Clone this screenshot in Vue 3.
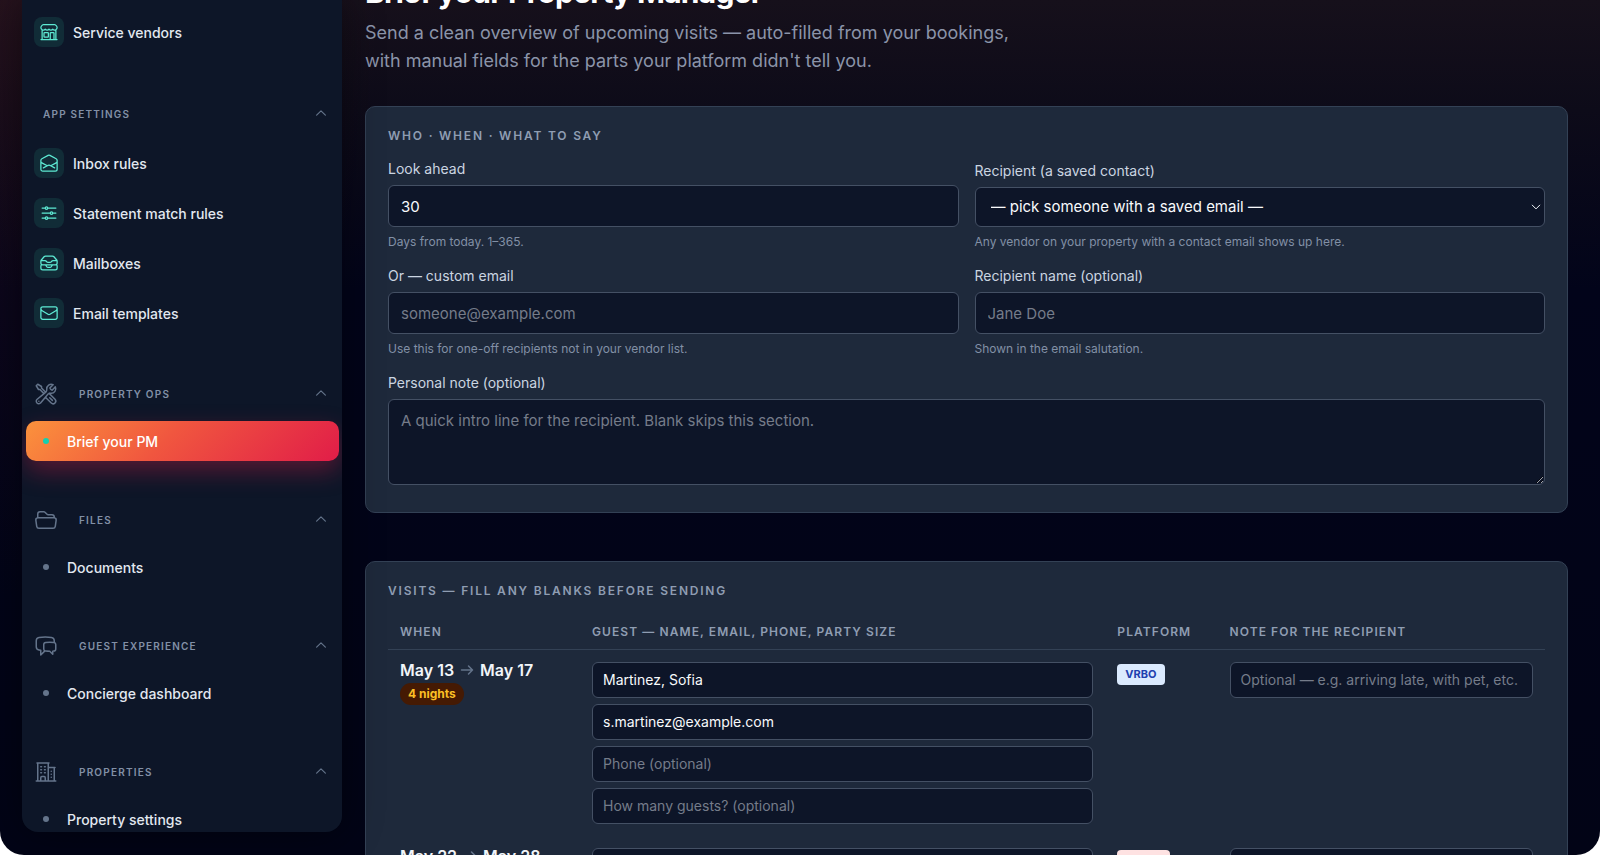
<template>
  <div class="page">
    <div class="shell">
      <nav class="sidebar" aria-label="Main">
        <ul class="links">
          <li>
            <a href="#vendors" class="link tiled">
              <span class="tile">
                <svg viewBox="0 0 24 24"><path :d="icons.storefront" /></svg>
              </span>
              Service vendors
            </a>
          </li>
        </ul>

        <section v-for="group in groups" :key="group.title" class="group">
          <button
            type="button"
            class="group-head"
            :class="{ plain: !group.icon }"
            :aria-expanded="!closed[group.title]"
            @click="toggleGroup(group.title)"
          >
            <svg v-if="group.icon" class="group-icon" viewBox="0 0 24 24">
              <path :d="icons[group.icon]" />
            </svg>
            <span class="group-title">{{ group.title }}</span>
            <svg class="chevron" viewBox="0 0 24 24"><path d="m4.5 15.75 7.5-7.5 7.5 7.5" /></svg>
          </button>
          <ul v-if="!closed[group.title]" class="links">
            <li v-for="item in group.items" :key="item.label">
              <a
                href="#"
                class="link"
                :class="{ tiled: item.icon, active: active === item.label }"
                @click.prevent="active = item.label"
              >
                <span v-if="item.icon" class="tile">
                  <svg viewBox="0 0 24 24"><path :d="icons[item.icon]" /></svg>
                </span>
                <span v-else class="dot"></span>
                {{ item.label }}
              </a>
            </li>
          </ul>
        </section>
      </nav>

      <main class="main">
        <header class="intro">
          <h1>Brief your Property Manager</h1>
          <p>
            Send a clean overview of upcoming visits — auto-filled from your bookings, with manual
            fields for the parts your platform didn't tell you.
          </p>
        </header>

        <section class="card form-card">
          <h2>Who · When · What to say</h2>
          <div class="form-grid">
            <div class="field">
              <label for="days">Look ahead</label>
              <input id="days" v-model="form.days" type="text" inputmode="numeric" />
              <small>Days from today. 1–365.</small>
            </div>
            <div class="field">
              <label for="contact">Recipient (a saved contact)</label>
              <div class="select-wrap">
                <select id="contact" v-model="form.contact">
                  <option value="">— pick someone with a saved email —</option>
                </select>
                <svg viewBox="0 0 24 24"><path d="m4.5 8.25 7.5 7.5 7.5-7.5" /></svg>
              </div>
              <small>Any vendor on your property with a contact email shows up here.</small>
            </div>
            <div class="field">
              <label for="email">Or — custom email</label>
              <input id="email" v-model="form.email" type="email" placeholder="someone@example.com" />
              <small>Use this for one-off recipients not in your vendor list.</small>
            </div>
            <div class="field">
              <label for="name">Recipient name (optional)</label>
              <input id="name" v-model="form.name" type="text" placeholder="Jane Doe" />
              <small>Shown in the email salutation.</small>
            </div>
            <div class="field wide">
              <label for="note">Personal note (optional)</label>
              <textarea
                id="note"
                v-model="form.note"
                placeholder="A quick intro line for the recipient. Blank skips this section."
              ></textarea>
            </div>
          </div>
        </section>

        <section class="card">
          <h2>Visits — fill any blanks before sending</h2>
          <table>
            <thead>
              <tr>
                <th class="col-when">When</th>
                <th class="col-guest">Guest — name, email, phone, party size</th>
                <th class="col-platform">Platform</th>
                <th>Note for the recipient</th>
              </tr>
            </thead>
            <tbody>
              <tr v-for="visit in visits" :key="visit.id">
                <td>
                  <div class="dates">
                    {{ visit.from }}
                    <svg viewBox="0 0 14 14"><path d="M1.5 7h11M8.5 3l4 4-4 4" /></svg>
                    {{ visit.to }}
                  </div>
                  <span class="nights">{{ visit.nights }} nights</span>
                </td>
                <td>
                  <div class="guest">
                    <input v-model="visit.name" type="text" placeholder="Name" aria-label="Guest name" />
                    <input v-model="visit.email" type="email" placeholder="Email (optional)" aria-label="Guest email" />
                    <input v-model="visit.phone" type="tel" placeholder="Phone (optional)" aria-label="Guest phone" />
                    <input v-model="visit.party" type="text" placeholder="How many guests? (optional)" aria-label="Party size" />
                  </div>
                </td>
                <td>
                  <span class="platform" :class="visit.platform.toLowerCase()">{{ visit.platform }}</span>
                </td>
                <td>
                  <input
                    v-model="visit.note"
                    type="text"
                    class="note"
                    placeholder="Optional — e.g. arriving late, with pet, etc."
                    aria-label="Note for the recipient"
                  />
                </td>
              </tr>
            </tbody>
          </table>
        </section>
      </main>
    </div>
  </div>
</template>

<script setup>
import { reactive, ref } from 'vue';

const icons = {
  storefront:
    'M13.5 21v-7.5a.75.75 0 0 1 .75-.75h3a.75.75 0 0 1 .75.75V21m-4.5 0H2.36m11.14 0H18m0 0h3.64m-1.39 0V9.349M3.75 21V9.349m0 0a3.001 3.001 0 0 0 3.75-.615A2.993 2.993 0 0 0 9.75 9.75c.896 0 1.7-.393 2.25-1.016a2.993 2.993 0 0 0 2.25 1.016c.896 0 1.7-.393 2.25-1.015a3.001 3.001 0 0 0 3.75.614m-16.5 0a3.004 3.004 0 0 1-.621-4.72l1.189-1.19A1.5 1.5 0 0 1 5.378 3h13.243a1.5 1.5 0 0 1 1.06.44l1.19 1.189a3 3 0 0 1-.621 4.72M6.75 18h3.75a.75.75 0 0 0 .75-.75V13.5a.75.75 0 0 0-.75-.75H6.75a.75.75 0 0 0-.75.75v3.75c0 .414.336.75.75.75Z',
  envelopeOpen:
    'M21.75 9v.906a2.25 2.25 0 0 1-1.183 1.981l-6.478 3.488M2.25 9v.906a2.25 2.25 0 0 0 1.183 1.981l6.478 3.488m8.839 2.51-4.66-2.51m0 0-1.023-.55a2.25 2.25 0 0 0-2.134 0l-1.022.55m0 0-4.661 2.51m16.5 1.615a2.25 2.25 0 0 1-2.25 2.25h-15a2.25 2.25 0 0 1-2.25-2.25V8.844a2.25 2.25 0 0 1 1.183-1.981l7.5-4.039a2.25 2.25 0 0 1 2.134 0l7.5 4.039a2.25 2.25 0 0 1 1.183 1.98V19.5Z',
  sliders:
    'M10.5 6h9.75M10.5 6a1.5 1.5 0 1 1-3 0m3 0a1.5 1.5 0 1 0-3 0M3.75 6H7.5m3 12h9.75m-9.75 0a1.5 1.5 0 0 1-3 0m3 0a1.5 1.5 0 0 0-3 0m-3.75 0H7.5m9-6h3.75m-3.75 0a1.5 1.5 0 0 1-3 0m3 0a1.5 1.5 0 0 0-3 0m-9.75 0h9.75',
  inboxStack:
    'm7.875 14.25 1.214 1.942a2.25 2.25 0 0 0 1.908 1.058h2.006c.776 0 1.497-.4 1.908-1.058l1.214-1.942M2.41 9h4.636a2.25 2.25 0 0 1 1.872 1.002l.164.246a2.25 2.25 0 0 0 1.872 1.002h2.092a2.25 2.25 0 0 0 1.872-1.002l.164-.246A2.25 2.25 0 0 1 16.954 9h4.636M2.41 9a2.25 2.25 0 0 0-.16.832V12a2.25 2.25 0 0 0 2.25 2.25h15A2.25 2.25 0 0 0 21.75 12V9.832c0-.287-.055-.57-.16-.832M2.41 9a2.25 2.25 0 0 1 .382-.632l3.285-3.832a2.25 2.25 0 0 1 1.708-.786h8.43c.657 0 1.281.287 1.709.786l3.284 3.832c.163.19.291.404.382.632M4.5 20.25h15A2.25 2.25 0 0 0 21.75 18v-2.625c0-.621-.504-1.125-1.125-1.125H3.375c-.621 0-1.125.504-1.125 1.125V18a2.25 2.25 0 0 0 2.25 2.25Z',
  envelope:
    'M21.75 6.75v10.5a2.25 2.25 0 0 1-2.25 2.25h-15a2.25 2.25 0 0 1-2.25-2.25V6.75m19.5 0A2.25 2.25 0 0 0 19.5 4.5h-15a2.25 2.25 0 0 0-2.25 2.25m19.5 0v.243a2.25 2.25 0 0 1-1.07 1.916l-7.5 4.615a2.25 2.25 0 0 1-2.36 0L3.32 8.91a2.25 2.25 0 0 1-1.07-1.916V6.75',
  tools:
    'M11.42 15.17 17.25 21A2.652 2.652 0 0 0 21 17.25l-5.877-5.877M11.42 15.17l2.496-3.03c.317-.384.74-.626 1.208-.766M11.42 15.17l-4.655 5.653a2.548 2.548 0 1 1-3.586-3.586l6.837-5.63m5.108-.233c.55-.164 1.163-.188 1.743-.14a4.5 4.5 0 0 0 4.486-6.336l-3.276 3.277a3.004 3.004 0 0 1-2.25-2.25l3.276-3.276a4.5 4.5 0 0 0-6.336 4.486c.091 1.076-.071 2.264-.904 2.95l-.102.085m-1.745 1.437L5.909 7.5H4.5L2.25 3.75l1.5-1.5L7.5 4.5v1.409l4.26 4.26m-1.745 1.437 1.745-1.437m6.615 8.206L15.75 15.75M4.867 19.125h.008v.008h-.008v-.008Z',
  folder:
    'M3.75 9.776c.112-.017.227-.026.344-.026h15.812c.117 0 .232.009.344.026m-16.5 0a2.25 2.25 0 0 0-1.883 2.542l.857 6a2.25 2.25 0 0 0 2.227 1.932H19.05a2.25 2.25 0 0 0 2.227-1.932l.857-6a2.25 2.25 0 0 0-1.883-2.542m-16.5 0V6A2.25 2.25 0 0 1 6 3.75h3.879a1.5 1.5 0 0 1 1.06.44l2.122 2.12a1.5 1.5 0 0 0 1.06.44H18A2.25 2.25 0 0 1 20.25 9v.776',
  chat:
    'M20.25 8.511c.884.284 1.5 1.128 1.5 2.097v4.286c0 1.136-.847 2.1-1.98 2.193-.34.027-.68.052-1.02.072v3.091l-3-3c-1.354 0-2.694-.055-4.02-.163a2.115 2.115 0 0 1-.825-.242m9.345-8.334a2.126 2.126 0 0 0-.476-.095 48.64 48.64 0 0 0-8.048 0c-1.131.094-1.976 1.057-1.976 2.192v4.286c0 .837.46 1.58 1.155 1.951m9.345-8.334V6.637c0-1.621-1.152-3.026-2.76-3.235A48.455 48.455 0 0 0 11.25 3c-2.115 0-4.198.137-6.24.402-1.608.209-2.76 1.614-2.76 3.235v6.226c0 1.621 1.152 3.026 2.76 3.235.577.075 1.157.14 1.74.194V21l4.155-4.155',
  building:
    'M2.25 21h19.5m-18-18v18m10.5-18v18m6-13.5V21M6.75 6.75h.75m-.75 3h.75m-.75 3h.75m3-6h.75m-.75 3h.75m-.75 3h.75M6.75 21v-3.375c0-.621.504-1.125 1.125-1.125h2.25c.621 0 1.125.504 1.125 1.125V21M3 3h12m-.75 4.5H21m-3.75 3.75h.008v.008h-.008v-.008Zm0 3h.008v.008h-.008v-.008Zm0 3h.008v.008h-.008v-.008Z',
};

const groups = [
  {
    title: 'App settings',
    items: [
      { label: 'Inbox rules', icon: 'envelopeOpen' },
      { label: 'Statement match rules', icon: 'sliders' },
      { label: 'Mailboxes', icon: 'inboxStack' },
      { label: 'Email templates', icon: 'envelope' },
    ],
  },
  { title: 'Property ops', icon: 'tools', items: [{ label: 'Brief your PM' }] },
  { title: 'Files', icon: 'folder', items: [{ label: 'Documents' }] },
  { title: 'Guest experience', icon: 'chat', items: [{ label: 'Concierge dashboard' }] },
  { title: 'Properties', icon: 'building', items: [{ label: 'Property settings' }] },
];

const active = ref('Brief your PM');
const closed = reactive({});

const form = reactive({ days: '30', contact: '', email: '', name: '', note: '' });

const visits = reactive([
  {
    id: 1,
    from: 'May 13',
    to: 'May 17',
    nights: 4,
    name: 'Martinez, Sofia',
    email: 's.martinez@example.com',
    phone: '',
    party: '',
    platform: 'VRBO',
    note: '',
  },
  {
    id: 2,
    from: 'May 22',
    to: 'May 28',
    nights: 6,
    name: '',
    email: '',
    phone: '',
    party: '',
    platform: 'Airbnb',
    note: '',
  },
]);

function toggleGroup(title) {
  closed[title] = !closed[title];
}
</script>

<style>
body {
  background: #fff;
}
</style>

<style scoped>
* {
  box-sizing: border-box;
}

.page {
  height: 100vh;
  overflow: hidden;
  border-radius: 0 0 24px 24px;
  background:
    radial-gradient(ellipse 380px 600px at 0 0, rgba(120, 30, 40, 0.16), transparent),
    linear-gradient(180deg, #16101b 0, #0d0b19 110px, #02041a 290px, #020416 100%);
  color: #f1f5f9;
  font-family: Inter, "Liberation Sans", sans-serif;
  font-size: 14px;
}

.shell {
  display: flex;
  gap: 23px;
  height: 100%;
  padding: 0 32px 0 22px;
}

h1,
h2,
p,
ul {
  margin: 0;
  padding: 0;
}

svg {
  flex: none;
  fill: none;
  stroke: currentColor;
  stroke-width: 1.5;
  stroke-linecap: round;
  stroke-linejoin: round;
}

/* sidebar */
.sidebar {
  display: flex;
  flex: 0 0 320px;
  flex-direction: column;
  gap: 32px;
  z-index: 1;
  height: calc(100% - 23px);
  padding: 11px 3px 0 4px;
  overflow: hidden;
  border-radius: 0 0 16px 16px;
  background: #0d1628;
  box-shadow: 0 0 40px rgba(0, 0, 0, 0.45);
}

.group {
  flex: none;
}

.group-head {
  display: flex;
  align-items: center;
  width: 100%;
  height: 54px;
  padding: 0 11px 0 8px;
  border: 0;
  background: none;
  color: #8290a6;
  font: 600 10px/16px Inter, "Liberation Sans", sans-serif;
  letter-spacing: 0.12em;
  text-align: left;
  text-transform: uppercase;
  cursor: pointer;
}

.group-head.plain {
  height: 57px;
  padding-left: 17px;
}

.group-head.plain + .links {
  padding-bottom: 1px;
}

.group-icon {
  width: 24px;
  height: 24px;
  margin-right: 21px;
  color: #64748b;
}

.group-title {
  flex: 1;
}

.chevron {
  width: 14px;
  height: 14px;
  margin-bottom: 2px;
  color: #64748b;
  stroke-width: 2;
}

.links {
  display: flex;
  flex-direction: column;
  gap: 8px;
  list-style: none;
}

.link {
  display: flex;
  align-items: center;
  gap: 18px;
  height: 40px;
  padding: 0 17px;
  border-radius: 10px;
  color: #e2e8f0;
  font-weight: 500;
  text-decoration: none;
}

.link.tiled {
  gap: 9px;
  height: 42px;
  padding: 0 8px;
}

.link.active {
  background: linear-gradient(135deg, #fb923c 0%, #f0563f 45%, #e11d48 100%);
  box-shadow: 0 10px 24px rgba(225, 29, 72, 0.35);
  color: #fff;
}

.tile {
  display: grid;
  place-items: center;
  width: 30px;
  height: 30px;
  border-radius: 8px;
  background: #112c37;
  color: #5eead4;
}

.tile svg {
  width: 20px;
  height: 20px;
}

.dot {
  width: 6px;
  height: 6px;
  border-radius: 50%;
  background: #64748b;
}

.active .dot {
  background: #14d0b0;
}

/* content */
.main {
  flex: 1;
  min-width: 0;
}

.intro {
  margin-top: -27px;
  margin-bottom: 31px;
}

.intro h1 {
  margin-bottom: 8px;
  color: #fff;
  font-size: 30px;
  font-weight: 700;
  letter-spacing: -0.025em;
  line-height: 38px;
}

.intro p {
  max-width: 660px;
  color: #8b94a9;
  font-size: 18px;
  line-height: 28px;
}

.card {
  margin-bottom: 48px;
  padding: 20px 22px;
  border: 1px solid #334155;
  border-radius: 10px;
  background: #1e293b;
}

.form-card {
  padding-bottom: 27px;
}

.card h2 {
  margin-bottom: 14px;
  color: #8f9db2;
  font-size: 12px;
  font-weight: 600;
  letter-spacing: 0.15em;
  line-height: 18px;
  text-transform: uppercase;
}

.form-grid {
  display: grid;
  grid-template-columns: 1fr 1fr;
  align-items: end;
  gap: 16px;
}

.field {
  display: flex;
  flex-direction: column;
  gap: 6px;
  min-width: 0;
}

.field.wide {
  grid-column: 1 / -1;
}

.field label {
  color: #cbd5e1;
  font-size: 14px;
  line-height: 20px;
}

.field small {
  color: #8290a6;
  font-size: 12px;
  line-height: 17px;
}

input,
select,
textarea {
  display: block;
  width: 100%;
  height: 42px;
  margin: 0;
  padding: 0 12px;
  border: 1px solid #445064;
  border-radius: 6px;
  outline: 0;
  background: #0d1528;
  color: #f8fafc;
  font: 400 15px/22px Inter, "Liberation Sans", sans-serif;
}

input:focus,
select:focus,
textarea:focus {
  border-color: #2dd4bf;
}

::placeholder {
  color: #757c8a;
  opacity: 1;
}

textarea {
  height: 86px;
  padding: 10px 12px;
  resize: vertical;
}

.select-wrap {
  display: grid;
  align-items: center;
}

.select-wrap > * {
  grid-area: 1 / 1;
}

.select-wrap select {
  height: 40px;
  padding: 0 15px;
  appearance: none;
}

.select-wrap svg {
  justify-self: end;
  width: 12px;
  height: 12px;
  margin-right: 3px;
  pointer-events: none;
  stroke-width: 2;
}

table {
  width: 100%;
  border-collapse: collapse;
  table-layout: fixed;
}

th {
  height: 35px;
  padding: 0 12px;
  border-bottom: 1px solid #334155;
  color: #8f9db2;
  font-size: 12px;
  font-weight: 600;
  letter-spacing: 0.09em;
  text-align: left;
  text-transform: uppercase;
  white-space: nowrap;
}

.col-when {
  width: 16.6%;
}

.col-guest {
  width: 45.4%;
}

.col-platform {
  width: 9.7%;
}

td {
  padding: 12px;
  vertical-align: top;
}

td input {
  height: 36px;
  padding: 0 10px;
  font-size: 14px;
}

.guest {
  display: grid;
  gap: 6px;
}

.dates {
  display: flex;
  align-items: center;
  gap: 6px;
  font-size: 16px;
  font-weight: 600;
  line-height: 16px;
}

.dates svg {
  width: 14px;
  height: 14px;
  color: #64748b;
}

.nights {
  display: inline-block;
  margin-top: 5px;
  padding: 0 8px;
  border-radius: 11px;
  background: #451a03;
  color: #fbbf24;
  font-size: 12px;
  font-weight: 700;
  line-height: 22px;
}

.platform {
  display: inline-block;
  margin-top: 2px;
  padding: 0 8px;
  border-radius: 4px;
  background: #dbeafe;
  color: #1e40af;
  font-size: 11px;
  font-weight: 700;
  line-height: 21px;
}

.platform.airbnb {
  background: #fee2e2;
  color: #b91c1c;
}
</style>
